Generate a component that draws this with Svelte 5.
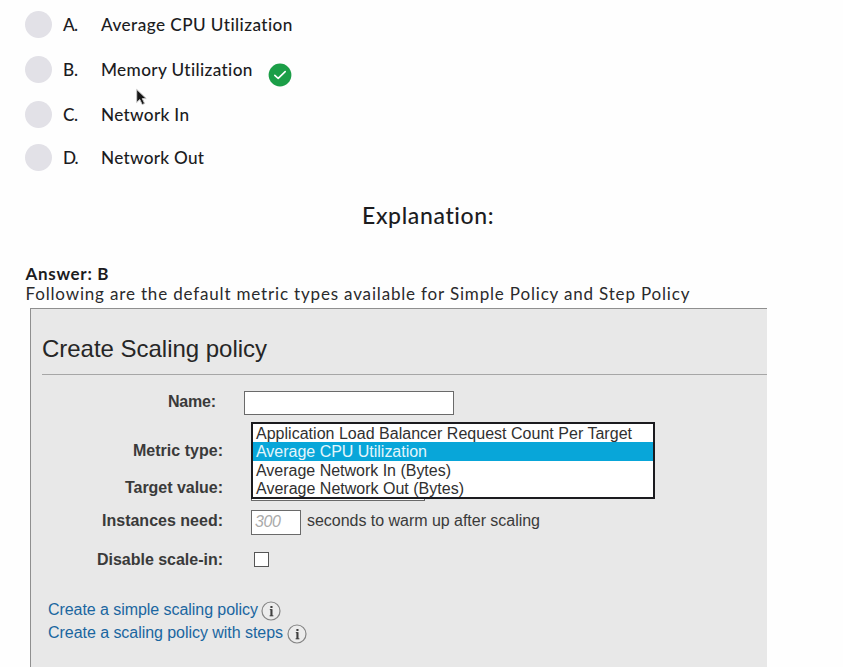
<script>
  const options = [
    { letter: 'A.', text: 'Average CPU Utilization', lw: 15, width: 192 },
    { letter: 'B.', text: 'Memory Utilization', lw: 15, width: 152, correct: true },
    { letter: 'C.', text: 'Network In', lw: 15, width: 88 },
    { letter: 'D.', text: 'Network Out', lw: 15.5, width: 103 }
  ];
  const metrics = [
    { text: 'Application Load Balancer Request Count Per Target', width: 376 },
    { text: 'Average CPU Utilization', width: 171, selected: true },
    { text: 'Average Network In (Bytes)', width: 195 },
    { text: 'Average Network Out (Bytes)', width: 208 }
  ];
  const links = [
    { text: 'Create a simple scaling policy', width: 210 },
    { text: 'Create a scaling policy with steps', width: 235 }
  ];

  // Tracks a single line of text so that it fills the given width.
  function track(node, width) {
    node.style.letterSpacing = '0px';
    const natural = node.getBoundingClientRect().width;
    const gaps = node.textContent.length - 1;
    const spacing = (width - natural) / gaps;
    node.style.letterSpacing = `${spacing}px`;
    node.style.marginRight = `${-spacing}px`;
  }
</script>

<main>
  <ul class="options">
    {#each options as o}
      <li>
        <span class="radio"></span>
        <span class="letter"><span class="t" use:track={o.lw}>{o.letter}</span></span>
        <span class="t" use:track={o.width}>{o.text}</span>
        {#if o.correct}
          <svg class="check" width="24" height="24" viewBox="0 0 24 24">
            <circle cx="12" cy="12" r="11.4" fill="#1b9e47" />
            <path d="M6.8 12.4 10.2 15.4 17.2 8.6" fill="none" stroke="#fff" stroke-width="1.6" stroke-linecap="round" stroke-linejoin="round" />
          </svg>
        {/if}
      </li>
    {/each}
  </ul>

  <h2><span class="t" use:track={132}>Explanation:</span></h2>

  <p class="answer"><span class="t" use:track={83}>Answer: B</span></p>
  <p class="body"><span class="t" use:track={664}>Following are the default metric types available for Simple Policy and Step Policy</span></p>

  <section class="panel">
    <h3><span class="t" use:track={225}>Create Scaling policy</span></h3>

    <div class="row name">
      <div class="label"><span class="t" use:track={48}>Name:</span></div>
      <div class="field"></div>
    </div>
    <div class="row metric">
      <div class="label"><span class="t" use:track={90}>Metric type:</span></div>
      <div class="menu">
        {#each metrics as m}
          <div class="item" class:selected={m.selected}><span class="t" use:track={m.width}>{m.text}</span></div>
        {/each}
      </div>
    </div>
    <div class="row target">
      <div class="label"><span class="t" use:track={98}>Target value:</span></div>
      <div class="field"></div>
    </div>
    <div class="row instances">
      <div class="label"><span class="t" use:track={121}>Instances need:</span></div>
      <div class="field"><span class="t" use:track={26}>300</span></div>
      <div class="after"><span class="t" use:track={233}>seconds to warm up after scaling</span></div>
    </div>
    <div class="row disable">
      <div class="label"><span class="t" use:track={126}>Disable scale-in:</span></div>
      <div class="box"></div>
    </div>

    <div class="links">
      {#each links as l}
        <div class="link">
          <span class="t" use:track={l.width}>{l.text}</span>
          <svg width="20" height="20" viewBox="0 0 20 20">
            <circle cx="10" cy="10" r="9" fill="#ececec" stroke="#858585" stroke-width="1.2" />
            <path d="M8.8 8.6h1.7v6.2M8.6 14.8h3.8" fill="none" stroke="#404040" stroke-width="1" />
            <rect x="9.4" y="8.2" width="2.1" height="6.8" fill="#404040" />
            <rect x="9.4" y="5" width="2.1" height="2" fill="#404040" />
          </svg>
        </div>
      {/each}
    </div>
  </section>

  <svg class="cursor" width="14" height="20" viewBox="0 0 14 20">
    <path d="M1.7 1.4v13l3.1-2.9 2.4 5.1 2.4-1.1-2.3-4.9h3.9z" fill="#161616" stroke="#c8c8c8" stroke-width="1" />
  </svg>
</main>

<style>
  :global(body) { margin: 0; background: #fefefe; }
  main {
    position: relative;
    box-sizing: border-box;
    width: 843px;
    height: 667px;
    overflow: hidden;
    padding-top: 11px;
    background: #fefefe;
    color: #1c1c1e;
    font-family: Lato, "Open Sans", sans-serif;
  }
  .t { display: inline-block; white-space: nowrap; }
  .options { list-style: none; margin: 0; padding: 0 0 0 25px; }
  li { display: flex; align-items: center; height: 27px; margin-bottom: 18px; font-size: 17.2px; font-weight: 500; }
  li:nth-child(3) { margin-bottom: 16px; }
  li:last-child { margin-bottom: 0; }
  .radio { width: 27px; height: 27px; border-radius: 50%; background: #e2e1e7; margin-right: 11px; }
  .letter { width: 38px; }
  .check { margin: 11px 0 0 16px; }
  h2 { margin: 28px 0 0 362px; font-size: 23px; font-weight: 500; line-height: 33px; }
  p { margin: 0 0 0 25.5px; font-size: 17px; line-height: 20px; color: #2a2a2c; }
  .answer { margin-top: 32px; font-weight: 700; color: #1c1c1e; }
  .panel {
    box-sizing: border-box;
    width: 737px;
    height: 359px;
    margin: 4px 0 0 30px;
    border: solid #8f8f8f;
    border-width: 1px 0 0 1px;
    background: #e8e8e8;
    color: #3a3a3a;
    font-family: "Liberation Sans", Arial, sans-serif;
    font-size: 16px;
    line-height: 21px;
  }
  h3 {
    margin: 0 0 16px 11px;
    box-sizing: border-box;
    height: 66px;
    padding-top: 24px;
    border-bottom: 1px solid #a6a6a6;
    color: #262626;
    font-size: 24px;
    font-weight: 400;
    line-height: 32px;
  }
  .row { position: relative; display: flex; align-items: flex-start; gap: 29px; }
  .label { width: 192px; text-align: right; font-weight: 700; font-size: 16px; }
  .field { box-sizing: border-box; border: 1px solid #6a6a6a; background: #fff; }
  .name { height: 24px; }
  .name .label { width: 185px; }
  .name .field { width: 210px; height: 24px; margin-left: -1px; }
  .metric { height: 54px; }
  .metric .label { padding-top: 25px; }
  .target { height: 41px; }
  .target .label { padding-top: 8px; }
  .target .field { width: 174px; height: 24px; margin: 8px 0 0 -1px; }
  .instances { height: 42px; }
  .instances .field { width: 50px; height: 25px; margin-left: -1px; padding-left: 3px; color: #aaa; font-style: italic; line-height: 22px; }
  .after { margin-left: -23px; }
  .disable { height: 46px; }
  .disable .label { margin-top: -3px; }
  .box { box-sizing: border-box; width: 15px; height: 15px; margin-left: 2px; border: 1px solid #555; background: #fff; }
  .menu {
    position: absolute;
    z-index: 1;
    left: 220px;
    top: 7px;
    box-sizing: border-box;
    width: 404px;
    height: 77px;
    border: 2px solid #1b1b1f;
    background: #fff;
    color: #303030;
  }
  .item { height: 18.25px; padding-left: 3px; line-height: 19px; }
  .selected { background: #08a6d9; color: #e4f6fc; }
  .links { padding-left: 17px; color: #1a66a0; }
  .link { display: flex; align-items: center; height: 23px; }
  .link svg { margin: 2px 0 0 3.5px; }
  .cursor { position: absolute; left: 135px; top: 88px; }
</style>
